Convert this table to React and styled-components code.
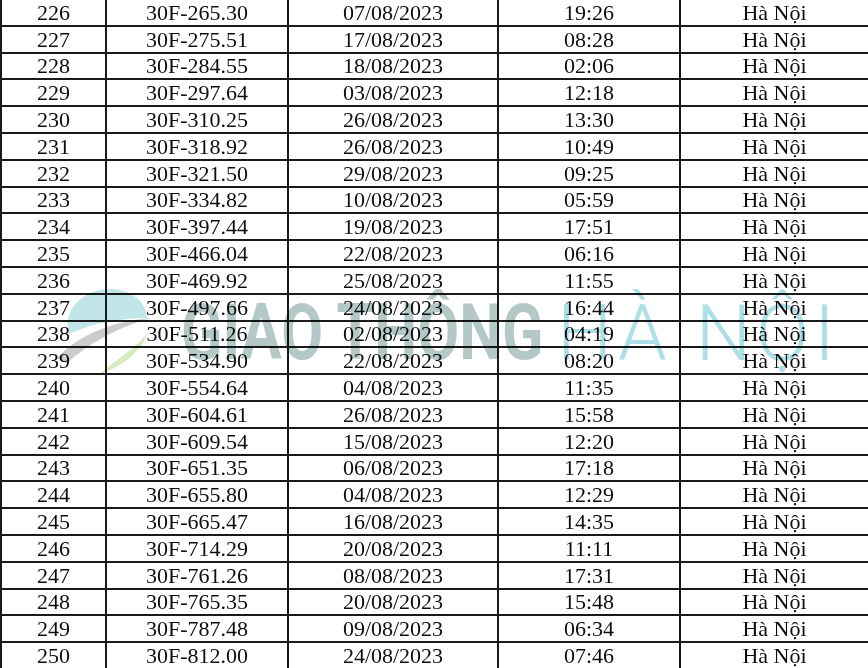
import React from 'react'
import styled, { createGlobalStyle } from 'styled-components';

const rows = [
    ['226', '30F-265.30', '07/08/2023', '19:26'],
    ['227', '30F-275.51', '17/08/2023', '08:28'],
    ['228', '30F-284.55', '18/08/2023', '02:06'],
    ['229', '30F-297.64', '03/08/2023', '12:18'],
    ['230', '30F-310.25', '26/08/2023', '13:30'],
    ['231', '30F-318.92', '26/08/2023', '10:49'],
    ['232', '30F-321.50', '29/08/2023', '09:25'],
    ['233', '30F-334.82', '10/08/2023', '05:59'],
    ['234', '30F-397.44', '19/08/2023', '17:51'],
    ['235', '30F-466.04', '22/08/2023', '06:16'],
    ['236', '30F-469.92', '25/08/2023', '11:55'],
    ['237', '30F-497.66', '24/08/2023', '16:44'],
    ['238', '30F-511.26', '02/08/2023', '04:19'],
    ['239', '30F-534.90', '22/08/2023', '08:20'],
    ['240', '30F-554.64', '04/08/2023', '11:35'],
    ['241', '30F-604.61', '26/08/2023', '15:58'],
    ['242', '30F-609.54', '15/08/2023', '12:20'],
    ['243', '30F-651.35', '06/08/2023', '17:18'],
    ['244', '30F-655.80', '04/08/2023', '12:29'],
    ['245', '30F-665.47', '16/08/2023', '14:35'],
    ['246', '30F-714.29', '20/08/2023', '11:11'],
    ['247', '30F-761.26', '08/08/2023', '17:31'],
    ['248', '30F-765.35', '20/08/2023', '15:48'],
    ['249', '30F-787.48', '09/08/2023', '06:34'],
    ['250', '30F-812.00', '24/08/2023', '07:46'],
];

const colWidths = [105, 182, 210, 182, 189];

export default function App() {
    return (
        <Page>
            <GlobalStyle />
            <Table>
                <colgroup>
                    {colWidths.map((w, i) => <col key={i} style={{width: w}} />)}
                </colgroup>
                <tbody>
                    {rows.map(r => (
                        <Row key={r[0]}>
                            <Cell>{r[0]}</Cell>
                            <Cell>{r[1]}</Cell>
                            <Cell>{r[2]}</Cell>
                            <Cell>{r[3]}</Cell>
                            <Cell>Hà Nội</Cell>
                        </Row>
                    ))}
                </tbody>
            </Table>
            <Watermark>
                <Logo />
                <BrandBold>GIAO THÔNG</BrandBold>
                <BrandThin>HÀ NỘI</BrandThin>
            </Watermark>
        </Page>
    );
}

// logo mark of the watermark: sky dome, grey road, green swoosh
function Logo() {
    return (
        <LogoSvg width="100" height="95" viewBox="55 282 100 95">
            <path
                d="M69 334 C62 308 85 289 110 289 C132 289 147 303 147 318 C122 318 93 323 69 334 Z"
                fill="#c2e5e9"
            />
            <path
                d="M57 358 C77 336 112 321 150 318 C118 328 90 342 67 363 Z"
                fill="#cccccc"
            />
            <path
                d="M99 374 C121 368 141 352 149 331 C137 347 119 358 99 374 Z"
                fill="#d6ecbf"
            />
        </LogoSvg>
    );
}

const GlobalStyle = createGlobalStyle`
    html, body {
        margin: 0;
        padding: 0;
        background: #ffffff;
        overflow: hidden;
    }
`;

const Page = styled.div`
    position: relative;
    width: 868px;
    height: 668px;
    overflow: hidden;
    background: #fff;
`;

const Table = styled.table`
    width: 868px;
    height: 670px;
    margin-top: -2px;
    border-collapse: collapse;
    table-layout: fixed;
    font-family: "Liberation Serif", "Times New Roman", serif;
    font-size: 22px;
    color: #0d0d0d;
`;

const Row = styled.tr`
    height: 26.8px;
`;

const Cell = styled.td`
    border: 2px solid #1a1a1a;
    padding: 1px 0 0 0;
    text-align: center;
    vertical-align: middle;
    line-height: 1;
    white-space: nowrap;
`;

const Watermark = styled.div`
    position: absolute;
    inset: 0;
    pointer-events: none;
    mix-blend-mode: multiply;
`;

const LogoSvg = styled.svg`
    position: absolute;
    left: 55px;
    top: 282px;
`;

const BrandBold = styled.span`
    position: absolute;
    left: 181px;
    top: 295px;
    font-family: Roboto, "Liberation Sans", sans-serif;
    font-weight: 700;
    font-size: 77px;
    line-height: 1;
    color: #b4c9c7;
    white-space: nowrap;
    transform: scaleX(0.79);
    transform-origin: left top;
`;

const BrandThin = styled.span`
    position: absolute;
    left: 557px;
    top: 295px;
    font-family: Roboto, "Liberation Sans", sans-serif;
    font-weight: 300;
    font-size: 78px;
    line-height: 1;
    letter-spacing: 5px;
    color: #addfe6;
    white-space: nowrap;
`;
